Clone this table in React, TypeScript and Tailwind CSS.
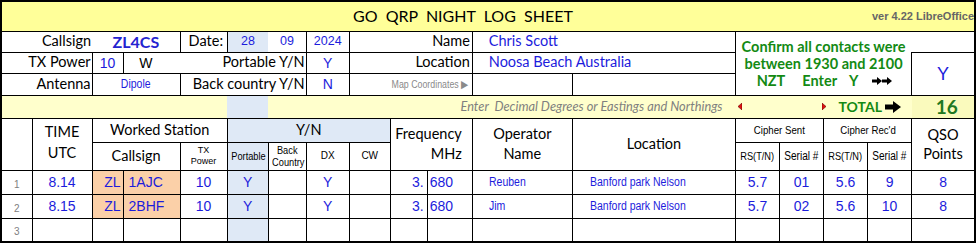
import React from 'react'

const lato = '[font-family:Lato,sans-serif]'
const arial = "[font-family:'Liberation_Sans',Arial,sans-serif]"
const blue = 'text-[#1c1cdc]'
const green = 'text-[#138a13]'
const ltblue = 'bg-[#dfe9f6]'
const orange = 'bg-[#fbd0a8]'
const cell = 'border border-black p-0 leading-none whitespace-nowrap overflow-hidden'
const label = `${lato} text-[14.5px] text-black`

// Arial Narrow look-alike: squeeze Liberation Sans horizontally
function Narrow({ children, origin = 'left' }: { children: React.ReactNode; origin?: 'left' | 'center' | 'right' }) {
  const o = origin === 'left' ? 'origin-left' : origin === 'right' ? 'origin-right' : 'origin-center'
  return <span className={`inline-block scale-x-[0.84] ${o} ${arial}`}>{children}</span>
}

function Arrow({ w = 11, h = 9 }: { w?: number; h?: number }) {
  return (
    <svg width={w} height={h} viewBox="0 0 11 10" preserveAspectRatio="none" className="inline-block">
      <polygon points="0,3 5.5,3 5.5,0 11,5 5.5,10 5.5,7 0,7" fill="#000" />
    </svg>
  )
}

function Marker({ dir }: { dir: 'l' | 'r' }) {
  return (
    <svg width="4" height="7" viewBox="0 0 4 7" className="block">
      {dir === 'l' ? (
        <polygon points="4,0 0,3.5 4,7" fill="#e01010" stroke="#600" strokeWidth="0.6" />
      ) : (
        <polygon points="0,0 4,3.5 0,7" fill="#e01010" stroke="#600" strokeWidth="0.6" />
      )}
    </svg>
  )
}

const rows = [
  { n: 1, time: '8.14', call: '1AJC', pwr: '10', port: 'Y', dx: 'Y', mhz: '680', op: 'Reuben', loc: 'Banford park Nelson', rs: '5.7', ser: '01', rr: '5.6', rser: '9', pts: '8' },
  { n: 2, time: '8.15', call: '2BHF', pwr: '10', port: 'Y', dx: 'Y', mhz: '680', op: 'Jim', loc: 'Banford park Nelson', rs: '5.7', ser: '02', rr: '5.6', rser: '10', pts: '8' },
]

export default function App() {
  const data = `${cell} ${arial} text-[14px] ${blue} text-center`
  return (
    <div className="bg-white w-[977px] h-[243px]">
      <table className="table-fixed border-collapse border-2 border-black w-[976px] bg-white">
        <colgroup>
          <col className="w-[31px]" />
          <col className="w-[60px]" />
          <col className="w-[31px]" />
          <col className="w-[57px]" />
          <col className="w-[47px]" />
          <col className="w-[41px]" />
          <col className="w-[38px]" />
          <col className="w-[43px]" />
          <col className="w-[41px]" />
          <col className="w-[37px]" />
          <col className="w-[45px]" />
          <col className="w-[100px]" />
          <col className="w-[163px]" />
          <col className="w-[44px]" />
          <col className="w-[44px]" />
          <col className="w-[44px]" />
          <col className="w-[44px]" />
          <col className="w-[63px]" />
        </colgroup>
        <tbody>
          {/* title */}
          <tr className="h-[30px] bg-[#ffff99]">
            <td colSpan={18} className={cell}>
              <div className="flex items-center">
                <span className={`${lato} text-[16px] pl-[351px] whitespace-pre`}>GO  QRP  NIGHT  LOG  SHEET</span>
                <span className={`ml-auto ${arial} font-bold text-[11px] text-[#666666]`}>ver 4.22 LibreOffice</span>
              </div>
            </td>
          </tr>

          {/* station info */}
          <tr className="h-[21px]">
            <td colSpan={2} className={`${cell} border-r-0 text-right pr-[1px] ${label}`}>Callsign</td>
            <td colSpan={2} className={`${cell} border-l-0 text-center ${lato} font-bold text-[16px] text-[#2424d0]`}>ZL4CS</td>
            <td className={`${cell} pl-[8px] ${label}`}>Date:</td>
            <td className={`${cell} border-r-0 ${ltblue} text-center ${arial} text-[12.5px] ${blue}`}>28</td>
            <td className={`${cell} border-l-0 text-center ${arial} text-[12.5px] ${blue}`}>09</td>
            <td className={`${cell} text-center ${arial} text-[12.5px] ${blue}`}>2024</td>
            <td colSpan={3} className={`${cell} text-right pr-[2px] ${label}`}>Name</td>
            <td colSpan={2} className={`${cell} pl-[16px] ${lato} text-[14.5px] ${blue}`}>Chris Scott</td>
            <td colSpan={4} rowSpan={3} className={`${cell} border-r-0 text-center ${lato} font-bold text-[14.5px] ${green}`}>
              <div className="leading-[17px] pt-[1px]">
                <div>Confirm all contacts were</div>
                <div>between 1930 and 2100</div>
                <div className="flex items-center justify-center pl-[2px]">
                  NZT<span className="ml-[17px]">Enter</span>
                  <span className="ml-[12px]">Y</span>
                  <span className="ml-[14px] flex">
                    <Arrow w={10} h={8} />
                    <Arrow w={10} h={8} />
                  </span>
                </div>
              </div>
            </td>
            <td className={`${cell} border-l-0`}></td>
          </tr>
          <tr className="h-[21px]">
            <td colSpan={2} className={`${cell} text-right pr-[1px] ${label}`}>TX Power</td>
            <td className={`${cell} text-center ${arial} text-[14px] ${blue}`}>10</td>
            <td className={`${cell} border-r-0 text-center ${arial} text-[14px] pr-[12px]`}>W</td>
            <td colSpan={3} className={`${cell} border-l-0 text-right pr-[1px] ${label}`}>Portable Y/N</td>
            <td className={`${cell} text-center ${arial} text-[14px] ${blue}`}>Y</td>
            <td colSpan={3} className={`${cell} text-right pr-[2px] ${label}`}>Location</td>
            <td colSpan={2} className={`${cell} pl-[16px] ${lato} text-[14.5px] ${blue}`}>Noosa Beach Australia</td>
            <td rowSpan={2} className={`${cell} text-center ${arial} text-[18px] ${blue}`}>Y</td>
          </tr>
          <tr className="h-[22px]">
            <td colSpan={2} className={`${cell} text-right pr-[1px] ${label}`}>Antenna</td>
            <td colSpan={2} className={`${cell} text-center text-[12.5px] ${blue}`}>
              <Narrow origin="center">Dipole</Narrow>
            </td>
            <td colSpan={3} className={`${cell} text-right pr-[1px] ${label}`}>Back country Y/N</td>
            <td className={`${cell} text-center ${arial} text-[14px] ${blue}`}>N</td>
            <td colSpan={3} className={`${cell} text-right pr-[4px] text-[10.5px] text-[#8a8a8a]`}>
              <Narrow origin="right">Map Coordinates ▶</Narrow>
            </td>
            <td className={cell}></td>
            <td className={cell}></td>
          </tr>

          {/* coordinates / total bar */}
          <tr className="h-[23px] bg-[#ffffcc]">
            <td colSpan={5} className={`${cell} border-r-0`}></td>
            <td className={`${cell} border-x-0 ${ltblue}`}></td>
            <td colSpan={7} className={`${cell} border-x-0 text-right pr-[13px] italic whitespace-pre ${lato} text-[12.8px] text-[#7f7f7f]`}>
              Enter  Decimal Degrees or Eastings and Northings
            </td>
            <td colSpan={4} className={`${cell} border-x-0`}>
              <div className="flex items-center">
                <span className="ml-[2px]">
                  <Marker dir="l" />
                </span>
                <span className="ml-[80px]">
                  <Marker dir="r" />
                </span>
                <span className={`ml-[13px] ${lato} font-bold text-[14px] ${green}`}>TOTAL</span>
                <span className="ml-[3px] flex">
                  <Arrow w={16} h={12} />
                </span>
              </div>
            </td>
            <td className={`${cell} border-l-0 bg-[#fafabd] text-center pl-[8px] ${lato} font-bold text-[19px] text-[#217821]`}>16</td>
          </tr>

          {/* log header */}
          <tr className="h-[24px]">
            <td rowSpan={2} className={cell}></td>
            <td rowSpan={2} className={`${cell} text-center ${label}`}>
              <div className="leading-[21px] pb-[4px]">
                <div>TIME</div>
                <div>UTC</div>
              </div>
            </td>
            <td colSpan={3} className={`${cell} text-center ${label}`}>Worked Station</td>
            <td colSpan={4} className={`${cell} text-center ${ltblue} ${label}`}>Y/N</td>
            <td colSpan={2} rowSpan={2} className={`${cell} text-right pr-[10px] ${label}`}>
              <div className="leading-[20px]">
                <div>Frequency</div>
                <div>MHz</div>
              </div>
            </td>
            <td rowSpan={2} className={`${cell} text-center ${label}`}>
              <div className="leading-[20px]">
                <div>Operator</div>
                <div>Name</div>
              </div>
            </td>
            <td rowSpan={2} className={`${cell} text-center ${label}`}>Location</td>
            <td colSpan={2} className={`${cell} text-center text-[11.5px]`}>
              <Narrow origin="center">Cipher Sent</Narrow>
            </td>
            <td colSpan={2} className={`${cell} text-center text-[11.5px]`}>
              <Narrow origin="center">Cipher Rec'd</Narrow>
            </td>
            <td rowSpan={2} className={`${cell} text-center ${label}`}>
              <div className="leading-[19px]">
                <div>QSO</div>
                <div>Points</div>
              </div>
            </td>
          </tr>
          <tr className="h-[28px]">
            <td colSpan={2} className={`${cell} text-center ${label}`}>Callsign</td>
            <td className={`${cell} text-center ${arial} text-[9px]`}>
              <div className="leading-[11px]">
                <div>TX</div>
                <div>Power</div>
              </div>
            </td>
            <td className={`${cell} text-center ${ltblue} text-[11px]`}>
              <Narrow origin="center">Portable</Narrow>
            </td>
            <td className={`${cell} text-center text-[11px]`}>
              <div className="leading-[12px]">
                <div>
                  <Narrow origin="center">Back</Narrow>
                </div>
                <div>
                  <Narrow origin="center">Country</Narrow>
                </div>
              </div>
            </td>
            <td className={`${cell} text-center ${arial} text-[10px]`}>DX</td>
            <td className={`${cell} text-center ${arial} text-[10px]`}>CW</td>
            <td className={`${cell} text-center text-[11px]`}>
              <Narrow origin="center">RS(T/N)</Narrow>
            </td>
            <td className={`${cell} text-center text-[12px]`}>
              <Narrow origin="center">Serial #</Narrow>
            </td>
            <td className={`${cell} text-center text-[11px]`}>
              <Narrow origin="center">RS(T/N)</Narrow>
            </td>
            <td className={`${cell} text-center text-[12px]`}>
              <Narrow origin="center">Serial #</Narrow>
            </td>
          </tr>

          {/* log rows */}
          {rows.map((r) => (
            <tr key={r.n} className="h-[24px]">
              <td className={`${cell} align-bottom pb-[4px] text-center ${arial} text-[10px] text-[#808080]`}>{r.n}</td>
              <td className={data}>{r.time}</td>
              <td className={`${cell} ${orange} text-right pr-[2px] ${arial} text-[14px] ${blue}`}>ZL</td>
              <td className={`${cell} ${orange} pl-[5px] ${arial} text-[14px] ${blue}`}>{r.call}</td>
              <td className={data}>{r.pwr}</td>
              <td className={`${data} ${ltblue}`}>{r.port}</td>
              <td className={data}></td>
              <td className={data}>{r.dx}</td>
              <td className={data}></td>
              <td className={`${cell} text-right pr-[3px] ${arial} text-[14px] ${blue}`}>3.</td>
              <td className={`${cell} pl-[2px] ${arial} text-[14px] ${blue}`}>{r.mhz}</td>
              <td className={`${cell} pl-[16px] text-[12.5px] ${blue}`}>
                <Narrow>{r.op}</Narrow>
              </td>
              <td className={`${cell} pl-[17px] text-[12.5px] ${blue}`}>
                <Narrow>{r.loc}</Narrow>
              </td>
              <td className={data}>{r.rs}</td>
              <td className={data}>{r.ser}</td>
              <td className={data}>{r.rr}</td>
              <td className={data}>{r.rser}</td>
              <td className={data}>{r.pts}</td>
            </tr>
          ))}
          <tr className="h-[24px]">
            <td className={`${cell} align-bottom pb-[4px] text-center ${arial} text-[10px] text-[#808080]`}>3</td>
            <td className={cell}></td>
            <td className={cell}></td>
            <td className={cell}></td>
            <td className={cell}></td>
            <td className={`${cell} ${ltblue}`}></td>
            <td className={cell}></td>
            <td className={cell}></td>
            <td className={cell}></td>
            <td className={cell}></td>
            <td className={cell}></td>
            <td className={cell}></td>
            <td className={cell}></td>
            <td className={cell}></td>
            <td className={cell}></td>
            <td className={cell}></td>
            <td className={cell}></td>
            <td className={cell}></td>
          </tr>
        </tbody>
      </table>
    </div>
  )
}
